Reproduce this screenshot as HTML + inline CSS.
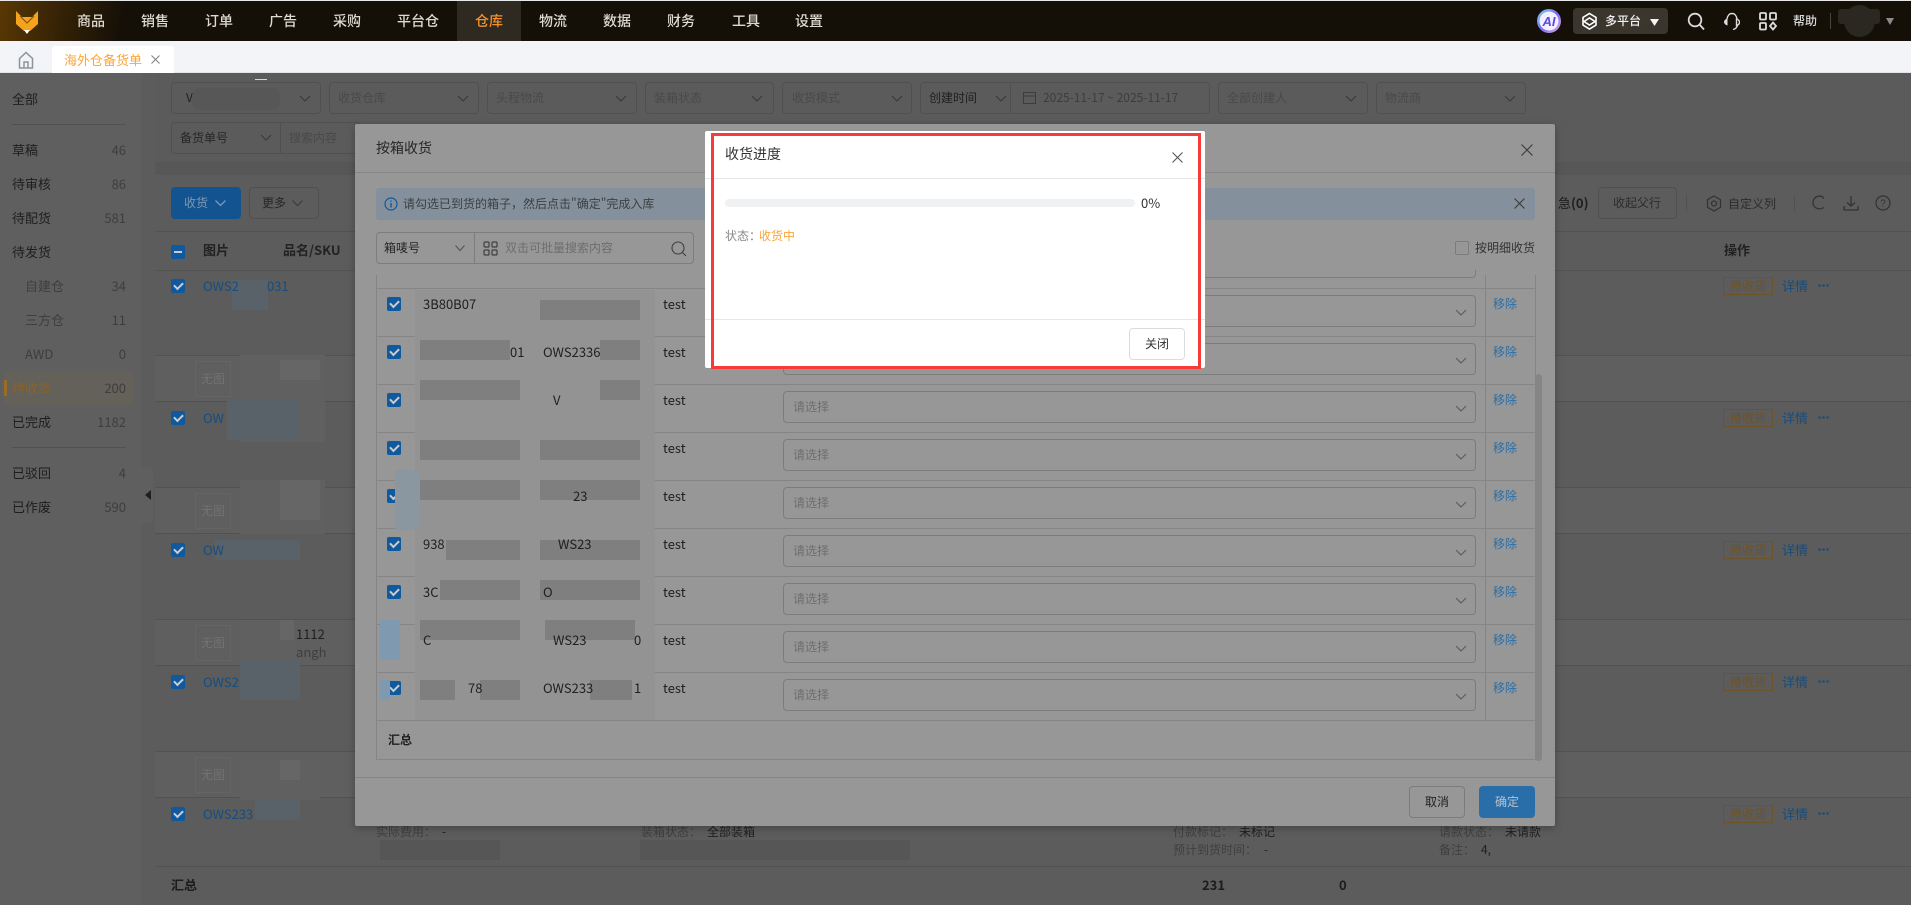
<!DOCTYPE html>
<html lang="zh">
<head>
<meta charset="utf-8">
<title>海外仓备货单</title>
<style>
*{box-sizing:border-box}
html,body{margin:0;padding:0;width:1911px;height:905px;overflow:hidden;background:#5b5c5b}
body{position:relative;font-family:"Noto Sans CJK SC","Liberation Sans",sans-serif;font-size:12px;color:#1c1c1c}
.t,.b,svg.i{position:absolute}
.t{white-space:nowrap;line-height:20px;height:20px}
.n{color:#dedad2;font-size:14px;font-weight:500;width:64px;text-align:center;top:11px}
.s{font-size:13px;left:12px;color:#1e1e1e}
.c{font-size:13px;right:1785px;color:#3e3e3e;text-align:right}
.f{border:1px solid #505050;border-radius:4px;height:32px}
.ph{color:#494949;font-size:12px}
.cb{position:absolute;width:14px;height:14px;border-radius:2px;background:#0f5a9e}
.cb:after{content:"";position:absolute;left:3px;top:3px;width:7px;height:4px;border-left:2px solid #c8ccd0;border-bottom:2px solid #c8ccd0;transform:rotate(-45deg)}
.lk{color:#174d80;font-size:13px}
.tag{position:absolute;left:1723px;width:50px;height:18px;border:1px solid #6e5228;border-radius:2px;color:#6e5228;font-size:12px;line-height:16px;text-align:center}
.dots{position:absolute;left:1818px;width:11px;height:3px}
.pl{color:#6e6e6e;font-size:12px}
.sel{position:absolute;left:783px;width:693px;height:32px;border:1px solid #7c7c7c;border-radius:4px}
.rm{color:#2a6fa8;font-size:12px;left:1493px}
.tx{color:#1f1f1f;font-size:12px}
.m{position:absolute;background:#7f7f7f}
.m2{position:absolute;background:#939393}
.pm{position:absolute;background:#5f605f}
.pb{position:absolute;background:#596268}
.lab{color:#3f3f3f}
</style>
</head>
<body>
<!-- NAV -->
<div class="b" style="left:0;top:0;width:1911px;height:41px;background:#151007;border-top:1px solid #e8e8e8"></div>
<div class="b" style="left:0;top:1px;width:160px;height:40px;background:linear-gradient(100deg,#5a3804 0%,#3c2606 30%,#151007 75%)"></div>
<svg class="i" style="left:15px;top:10px" width="24" height="25" viewBox="0 0 24 25"><path d="M1 1 L7 7 H17 L23 1 V14 L15 21 H9 L1 14Z" fill="#f5a31d"/><path d="M5 6 L12 13 L19 6" fill="none" stroke="#7a4f08" stroke-width="1"/><path d="M9 20 H15 L12 24Z" fill="#fff"/></svg>
<div class="b" style="left:457px;top:1px;width:64px;height:40px;background:#2e2a22"></div>
<div class="t n" style="left:59px">商品</div>
<div class="t n" style="left:123px">销售</div>
<div class="t n" style="left:187px">订单</div>
<div class="t n" style="left:251px">广告</div>
<div class="t n" style="left:315px">采购</div>
<div class="t n" style="left:386px">平台仓</div>
<div class="t n" style="left:457px;color:#f2912b">仓库</div>
<div class="t n" style="left:521px">物流</div>
<div class="t n" style="left:585px">数据</div>
<div class="t n" style="left:649px">财务</div>
<div class="t n" style="left:714px">工具</div>
<div class="t n" style="left:777px">设置</div>
<!-- nav right -->
<svg class="i" style="left:1536px;top:8px" width="26" height="26" viewBox="0 0 26 26"><defs><linearGradient id="g" x1="0" y1="0" x2="1" y2="1"><stop offset="0" stop-color="#7ad9f5"/><stop offset=".5" stop-color="#7b6cf5"/><stop offset="1" stop-color="#e9a5ef"/></linearGradient></defs><circle cx="13" cy="13" r="12" fill="url(#g)"/><circle cx="13" cy="13" r="9.5" fill="#f3f1ff"/><text x="13" y="18" text-anchor="middle" font-size="13" font-weight="700" font-style="italic" fill="#5a49e8" font-family="Liberation Sans">AI</text></svg>
<div class="b" style="left:1573px;top:8px;width:95px;height:26px;border-radius:4px;background:#3a362e"></div>
<svg class="i" style="left:1581px;top:12px" width="17" height="19" viewBox="0 0 17 19" fill="none" stroke="#fff" stroke-width="1.6"><path d="M8.5 1.500 L15 5.500 V13 L8.5 17 L2 13 V5.500Z"/><path d="M3 9.500 L8.5 6 L14 9.500 L8.5 13Z"/></svg>
<div class="t" style="left:1605px;top:11px;color:#f2f2f2;font-weight:500;font-size:12px">多平台</div>
<svg class="i" style="left:1650px;top:19px" width="9" height="7"><path d="M0 0H9L4.500 7Z" fill="#f4f4f4"/></svg>
<svg class="i" style="left:1687px;top:12px" width="19" height="19" viewBox="0 0 19 19" fill="none" stroke="#dcdcdc" stroke-width="1.800"><circle cx="8" cy="8" r="6.300"/><path d="M12.500 12.500L17 17.500"/></svg>
<svg class="i" style="left:1723px;top:12px" width="17" height="20" viewBox="0 0 17 20" fill="none" stroke="#dcdcdc" stroke-width="1.400"><path d="M4 7C4.500 3.500 6.500 1.500 9 1.500s4.500 2 5 5.500"/><path d="M14.500 13c-.5 2.500-2 4-4.500 4.500"/><path d="M4.500 6.500C2.500 7 1 8.500 1 10s1.500 3 3.500 3.500Z" fill="#dcdcdc" stroke="none"/><path d="M13.500 7c1.500 .5 3 1.700 3 3.200s-1.500 2.800-3 3.300Z"/></svg>
<svg class="i" style="left:1759px;top:12px" width="18" height="19" viewBox="0 0 18 19" fill="none" stroke="#dcdcdc" stroke-width="1.800"><rect x="1" y="1" width="6" height="6.500" rx="1"/><rect x="11" y="1" width="6" height="6.500" rx="1"/><rect x="1" y="11" width="6" height="6.500" rx="1"/><path d="M14 10.500l3 3.500-3 3.500-3-3.500Z"/></svg>
<div class="t" style="left:1793px;top:11px;color:#d8d8d8;font-size:12px;font-weight:500">帮助</div>
<div class="b" style="left:1830px;top:13px;width:1px;height:16px;background:#4a463e"></div>
<div class="b" style="left:1844px;top:5px;width:31px;height:32px;border-radius:50%;background:#2b2821"></div>
<div class="b" style="left:1838px;top:9px;width:42px;height:15px;background:#2b2821;border-radius:3px"></div>
<svg class="i" style="left:1886px;top:18px" width="8" height="7"><path d="M0 0H8L4 7Z" fill="#8a8a8a"/></svg>

<!-- TAB BAR -->
<div class="b" style="left:0;top:41px;width:1911px;height:32px;background:#f3f4f8;border-bottom:1px solid #e4e5e9"></div>
<svg class="i" style="left:18px;top:51px" width="16" height="18" viewBox="0 0 16 18" fill="none" stroke="#8d939c" stroke-width="1.500"><path d="M1.500 7.500L8 1.500l6.500 6V17h-13Z"/><path d="M6 17v-6h4v6"/></svg>
<div class="b" style="left:52px;top:46px;width:122px;height:27px;background:#fff;border-radius:3px 3px 0 0"></div>
<div class="t" style="left:64px;top:50px;color:#f9a63b;font-size:13px">海外仓备货单</div>
<svg class="i" style="left:151px;top:55px" width="9" height="9" fill="none" stroke="#7f7f7f" stroke-width="1"><path d="M.5 .5l8 8M8.500 .5l-8 8"/></svg>

<!-- SIDEBAR -->
<div class="b" style="left:0;top:73px;width:142px;height:832px;background:#5f5f5f"></div>
<div class="t s" style="top:89px">全部</div>
<div class="b" style="left:12px;top:124px;width:114px;height:1px;background:#515151"></div>
<div class="t s" style="top:140px">草稿</div><div class="t c" style="top:140px">46</div>
<div class="t s" style="top:174px">待审核</div><div class="t c" style="top:174px">86</div>
<div class="t s" style="top:208px">待配货</div><div class="t c" style="top:208px">581</div>
<div class="t s" style="top:242px">待发货</div>
<div class="t s" style="top:276px;left:25px;color:#3e3e3e">自建仓</div><div class="t c" style="top:276px">34</div>
<div class="t s" style="top:310px;left:25px;color:#3e3e3e">三方仓</div><div class="t c" style="top:310px">11</div>
<div class="t s" style="top:344px;left:25px;color:#3e3e3e">AWD</div><div class="t c" style="top:344px">0</div>
<div class="b" style="left:4px;top:371px;width:129px;height:34px;border-radius:4px;background:#64615a"></div>
<div class="b" style="left:4px;top:380px;width:3px;height:16px;background:#9a6e22"></div>
<div class="t s" style="top:378px;color:#8a6228">待收货</div><div class="t c" style="top:378px">200</div>
<div class="t s" style="top:412px">已完成</div><div class="t c" style="top:412px">1182</div>
<div class="b" style="left:12px;top:447px;width:114px;height:1px;background:#515151"></div>
<div class="t s" style="top:463px">已驳回</div><div class="t c" style="top:463px">4</div>
<div class="t s" style="top:497px">已作废</div><div class="t c" style="top:497px">590</div>
<div class="b" style="left:142px;top:467px;width:11px;height:56px;background:#5f5f5f;border-radius:0 5px 5px 0"></div>
<svg class="i" style="left:145px;top:490px" width="6" height="10"><path d="M6 0V10L0 5Z" fill="#1f1f1f"/></svg>

<!-- FILTER CARD -->
<div class="b" style="left:155px;top:73px;width:1756px;height:89px;background:#5b5b5b"></div>
<div class="b" style="left:155px;top:162px;width:1756px;height:13px;background:#565756"></div>
<div class="b f" style="left:171px;top:82px;width:150px"></div>
<div class="b f" style="left:329px;top:82px;width:150px"></div><div class="t ph" style="left:338px;top:88px">收货仓库</div>
<div class="b f" style="left:487px;top:82px;width:150px"></div><div class="t ph" style="left:496px;top:88px">头程物流</div>
<div class="b f" style="left:645px;top:82px;width:129px"></div><div class="t ph" style="left:654px;top:88px">装箱状态</div>
<div class="b f" style="left:782px;top:82px;width:130px"></div><div class="t ph" style="left:792px;top:88px">收货模式</div>
<div class="b f" style="left:920px;top:82px;width:290px"></div><div class="b" style="left:1010px;top:82px;width:1px;height:32px;background:#505050"></div>
<div class="t" style="left:929px;top:88px;color:#1f1f1f">创建时间</div>
<svg class="i" style="left:1023px;top:91px" width="13" height="13" fill="none" stroke="#3c3c3c"><rect x=".5" y="1.500" width="12" height="11"/><path d="M.5 5h12"/></svg>
<div class="t" style="left:1043px;top:88px;color:#3d3d3d">2025-11-17 ~ 2025-11-17</div>
<div class="b f" style="left:1218px;top:82px;width:150px"></div><div class="t ph" style="left:1227px;top:88px">全部创建人</div>
<div class="b f" style="left:1376px;top:82px;width:150px"></div><div class="t ph" style="left:1385px;top:88px">物流商</div>
<svg class="i" style="left:0;top:0" width="1911" height="200" fill="none" stroke="#3c3c3c" stroke-width="1.200"><path d="M300 96l5 5 5-5M458 96l5 5 5-5M616 96l5 5 5-5M752 96l5 5 5-5M892 96l5 5 5-5M996 96l5 5 5-5M1346 96l5 5 5-5M1505 96l5 5 5-5M261 135l5 5 5-5"/></svg>
<div class="t" style="left:186px;top:88px;color:#1f1f1f">V</div>
<div class="b" style="left:192px;top:88px;width:88px;height:22px;background:#575757;border-radius:8px"></div>
<div class="b" style="left:255px;top:79px;width:12px;height:1px;background:#d8d8d8"></div>
<div class="b f" style="left:171px;top:122px;width:190px"></div><div class="b" style="left:280px;top:122px;width:1px;height:32px;background:#505050"></div>
<div class="t" style="left:180px;top:128px;color:#262626">备货单号</div><div class="t ph" style="left:289px;top:128px">搜索内容</div>

<!-- TABLE CARD -->
<div class="b" style="left:155px;top:175px;width:1756px;height:730px;background:#5b5c5b"></div>
<div class="b" style="left:171px;top:187px;width:70px;height:32px;background:#13538f;border-radius:4px"></div>
<div class="t" style="left:184px;top:193px;color:#7d99b5">收货</div>
<svg class="i" style="left:215px;top:200px" width="11" height="7" fill="none" stroke="#7d99b5" stroke-width="1.300"><path d="M.5 .5l5 5 5-5"/></svg>
<div class="b f" style="left:249px;top:187px;width:70px"></div>
<div class="t" style="left:262px;top:193px;color:#262626">更多</div>
<svg class="i" style="left:292px;top:200px" width="11" height="7" fill="none" stroke="#3c3c3c" stroke-width="1.200"><path d="M.5 .5l5 5 5-5"/></svg>
<div class="t" style="left:1558px;top:193px;color:#1d1d1d;font-size:13px">急<b>(0)</b></div>
<div class="b f" style="left:1598px;top:187px;width:79px"></div>
<div class="t" style="left:1613px;top:193px;color:#2c2c2c">收起父行</div>
<div class="b" style="left:1686px;top:195px;width:1px;height:16px;background:#515151"></div>
<svg class="i" style="left:1706px;top:195px" width="16" height="17" fill="none" stroke="#333" stroke-width="1.200"><path d="M8 1l6.500 3.700v7.600L8 16 1.500 12.300V4.700Z"/><circle cx="8" cy="8.500" r="2.500"/></svg>
<div class="t" style="left:1728px;top:194px;color:#2c2c2c">自定义列</div>
<div class="b" style="left:1794px;top:195px;width:1px;height:16px;background:#515151"></div>
<svg class="i" style="left:1811px;top:194px" width="16" height="18" fill="none" stroke="#333" stroke-width="1.300"><path d="M13 4.500C10 .500 3 1.500 2 8c-.6 5 5 9 11 5.500"/></svg>
<svg class="i" style="left:1843px;top:195px" width="16" height="16" fill="none" stroke="#333" stroke-width="1.300"><path d="M8 1v10M4 7.500L8 11l4-3.500M1 11v4h14v-4"/></svg>
<svg class="i" style="left:1875px;top:195px" width="16" height="16" fill="none" stroke="#333" stroke-width="1.200"><circle cx="8" cy="8" r="7"/><text x="8" y="11.500" text-anchor="middle" font-size="10" fill="#333" stroke="none" font-family="Liberation Sans">?</text></svg>
<div class="b" style="left:155px;top:231px;width:1756px;height:1px;background:#515251"></div>
<div class="b" style="left:155px;top:270px;width:1756px;height:1px;background:#515251"></div>
<div class="b" style="left:171px;top:245px;width:14px;height:14px;border-radius:2px;background:#0f5a9e"></div>
<div class="b" style="left:174px;top:251px;width:8px;height:2px;background:#c8ccd0"></div>
<div class="t" style="left:203px;top:240px;font-size:13px;font-weight:700;color:#222">图片</div>
<div class="t" style="left:283px;top:240px;font-size:13px;font-weight:700;color:#222">品名/SKU</div>
<div class="t" style="left:1724px;top:240px;font-size:13px;font-weight:700;color:#222">操作</div>

<!-- child rows -->
<div class="b" style="left:155px;top:355px;width:1756px;height:47px;background:#5e5f5e;border-top:1px solid #515251;border-bottom:1px solid #515251"></div>
<div class="b" style="left:155px;top:487px;width:1756px;height:47px;background:#5e5f5e;border-top:1px solid #515251;border-bottom:1px solid #515251"></div>
<div class="b" style="left:155px;top:619px;width:1756px;height:47px;background:#5e5f5e;border-top:1px solid #515251;border-bottom:1px solid #515251"></div>
<div class="b" style="left:155px;top:751px;width:1756px;height:47px;background:#5e5f5e;border-top:1px solid #515251;border-bottom:1px solid #515251"></div>
<div class="b" style="left:155px;top:866px;width:1756px;height:1px;background:#515251"></div>
<div class="t pl" style="left:195px;top:369px;width:36px;height:36px;line-height:34px;margin-top:-8px;text-align:center;border:1px solid #656565;color:#727272">无图</div>
<div class="t pl" style="left:195px;top:501px;width:36px;height:36px;line-height:34px;margin-top:-8px;text-align:center;border:1px solid #656565;color:#727272">无图</div>
<div class="t pl" style="left:195px;top:633px;width:36px;height:36px;line-height:34px;margin-top:-8px;text-align:center;border:1px solid #656565;color:#727272">无图</div>
<div class="t pl" style="left:195px;top:765px;width:36px;height:36px;line-height:34px;margin-top:-8px;text-align:center;border:1px solid #656565;color:#727272">无图</div>
<!-- page mosaic -->
<div class="pm" style="left:240px;top:355px;width:85px;height:47px"></div>
<div class="pm" style="left:240px;top:402px;width:85px;height:40px"></div>
<div class="pm" style="left:240px;top:480px;width:85px;height:54px"></div>
<div class="pm" style="left:240px;top:620px;width:55px;height:50px"></div>
<div class="pm" style="left:240px;top:760px;width:80px;height:40px"></div>
<div class="b" style="left:280px;top:360px;width:40px;height:20px;background:#666"></div>
<div class="b" style="left:280px;top:480px;width:40px;height:40px;background:#666"></div>
<div class="b" style="left:280px;top:620px;width:14px;height:20px;background:#666"></div>
<div class="b" style="left:280px;top:760px;width:20px;height:20px;background:#666"></div>
<div class="pb" style="left:227px;top:400px;width:73px;height:40px"></div>
<div class="pb" style="left:215px;top:540px;width:85px;height:20px"></div>
<div class="pb" style="left:240px;top:660px;width:60px;height:40px"></div>
<div class="pb" style="left:255px;top:800px;width:45px;height:20px"></div>
<div class="pb" style="left:232px;top:280px;width:36px;height:30px"></div>
<div class="b cb" style="left:171px;top:279px"></div>
<div class="b cb" style="left:171px;top:411px"></div>
<div class="b cb" style="left:171px;top:543px"></div>
<div class="b cb" style="left:171px;top:675px"></div>
<div class="b cb" style="left:171px;top:807px"></div>
<div class="t lk" style="left:203px;top:276px">OWS2</div><div class="t lk" style="left:267px;top:276px">031</div>
<div class="t lk" style="left:203px;top:408px">OW</div>
<div class="t lk" style="left:203px;top:540px">OW</div>
<div class="t lk" style="left:203px;top:672px">OWS2</div>
<div class="t lk" style="left:203px;top:804px">OWS233</div>
<div class="t tx" style="left:296px;top:624px;font-size:13px">1112</div>
<div class="t" style="left:296px;top:642px;color:#3e3e3e;font-size:13px">angh</div>
<div class="tag" style="top:277px">待收货</div><div class="t lk" style="left:1782px;top:276px">详情</div>
<svg class="dots" style="top:284px" viewBox="0 0 11 3"><circle cx="1.500" cy="1.500" r="1.300" fill="#174d80"/><circle cx="5.500" cy="1.500" r="1.300" fill="#174d80"/><circle cx="9.500" cy="1.500" r="1.300" fill="#174d80"/></svg>
<div class="tag" style="top:409px">待收货</div><div class="t lk" style="left:1782px;top:408px">详情</div>
<svg class="dots" style="top:416px" viewBox="0 0 11 3"><circle cx="1.500" cy="1.500" r="1.300" fill="#174d80"/><circle cx="5.500" cy="1.500" r="1.300" fill="#174d80"/><circle cx="9.500" cy="1.500" r="1.300" fill="#174d80"/></svg>
<div class="tag" style="top:541px">待收货</div><div class="t lk" style="left:1782px;top:540px">详情</div>
<svg class="dots" style="top:548px" viewBox="0 0 11 3"><circle cx="1.500" cy="1.500" r="1.300" fill="#174d80"/><circle cx="5.500" cy="1.500" r="1.300" fill="#174d80"/><circle cx="9.500" cy="1.500" r="1.300" fill="#174d80"/></svg>
<div class="tag" style="top:673px">待收货</div><div class="t lk" style="left:1782px;top:672px">详情</div>
<svg class="dots" style="top:680px" viewBox="0 0 11 3"><circle cx="1.500" cy="1.500" r="1.300" fill="#174d80"/><circle cx="5.500" cy="1.500" r="1.300" fill="#174d80"/><circle cx="9.500" cy="1.500" r="1.300" fill="#174d80"/></svg>
<div class="tag" style="top:805px">待收货</div><div class="t lk" style="left:1782px;top:804px">详情</div>
<svg class="dots" style="top:812px" viewBox="0 0 11 3"><circle cx="1.500" cy="1.500" r="1.300" fill="#174d80"/><circle cx="5.500" cy="1.500" r="1.300" fill="#174d80"/><circle cx="9.500" cy="1.500" r="1.300" fill="#174d80"/></svg>
<div class="t lab" style="left:376px;top:822px">实际费用：</div><div class="t tx" style="left:442px;top:822px">-</div>
<div class="t lab" style="left:641px;top:822px">装箱状态：</div><div class="t tx" style="left:707px;top:822px">全部装箱</div>
<div class="t lab" style="left:1173px;top:822px">付款标记：</div><div class="t tx" style="left:1239px;top:822px">未标记</div>
<div class="t lab" style="left:1173px;top:840px">预计到货时间：</div><div class="t tx" style="left:1264px;top:840px">-</div>
<div class="t lab" style="left:1439px;top:822px">请款状态：</div><div class="t tx" style="left:1505px;top:822px">未请款</div>
<div class="t lab" style="left:1439px;top:840px">备注：</div><div class="t tx" style="left:1481px;top:840px">4,</div>
<div class="b" style="left:640px;top:840px;width:270px;height:20px;background:#555655"></div>
<div class="b" style="left:380px;top:840px;width:120px;height:20px;background:#555655"></div>
<div class="t" style="left:171px;top:875px;font-size:13px;font-weight:700;color:#1c1c1c">汇总</div>
<div class="t" style="left:1202px;top:875px;font-size:13px;font-weight:700;color:#1c1c1c">231</div>
<div class="t" style="left:1339px;top:875px;font-size:13px;font-weight:700;color:#1c1c1c">0</div>

<!-- DIALOG 1 -->
<div class="b" style="left:355px;top:124px;width:1200px;height:702px;background:#979797;border-radius:2px;box-shadow:0 2px 8px rgba(0,0,0,.25)"></div>
<div class="t" style="left:376px;top:138px;font-size:14px;color:#262626">按箱收货</div>
<div class="b" style="left:355px;top:172px;width:1200px;height:1px;background:#858585"></div>
<svg class="i" style="left:1521px;top:144px" width="12" height="12" fill="none" stroke="#3a3a3a" stroke-width="1.100"><path d="M.5 .5l11 11M11.500 .5l-11 11"/></svg>
<div class="b" style="left:376px;top:188px;width:1159px;height:32px;background:#84919c;border-radius:3px"></div>
<svg class="i" style="left:384px;top:197px" width="14" height="14" fill="none" stroke="#0f5a9e" stroke-width="1.200"><circle cx="7" cy="7" r="6"/><path d="M7 6v4.500M7 3.500v1.300" stroke-width="1.400"/></svg>
<div class="t" style="left:403px;top:194px;color:#3c3f42">请勾选已到货的箱子，然后点击"确定"完成入库</div>
<svg class="i" style="left:1514px;top:198px" width="11" height="11" fill="none" stroke="#3a3a3a" stroke-width="1.100"><path d="M.5 .5l10 10M10.500 .5l-10 10"/></svg>
<div class="b" style="left:376px;top:232px;width:318px;height:32px;border:1px solid #7d7d7d;border-radius:4px"></div>
<div class="b" style="left:474px;top:232px;width:1px;height:32px;background:#7d7d7d"></div>
<div class="t" style="left:384px;top:238px;color:#262626">箱唛号</div>
<svg class="i" style="left:455px;top:245px" width="10" height="7" fill="none" stroke="#555" stroke-width="1.100"><path d="M.5 .5L5 5.500 9.500 .5"/></svg>
<svg class="i" style="left:483px;top:241px" width="15" height="15" fill="none" stroke="#3f3f3f" stroke-width="1.200"><rect x="1" y="1" width="5" height="5" rx="1"/><rect x="9" y="1" width="5" height="5" rx="1"/><rect x="1" y="9" width="5" height="5" rx="1"/><rect x="9" y="9" width="5" height="5" rx="1"/></svg>
<div class="t pl" style="left:505px;top:238px">双击可批量搜索内容</div>
<svg class="i" style="left:671px;top:241px" width="16" height="16" fill="none" stroke="#3f3f3f" stroke-width="1.100"><circle cx="7" cy="7" r="6"/><path d="M11.500 11.500L15 15"/></svg>
<div class="b" style="left:1455px;top:241px;width:14px;height:14px;border:1px solid #7c7c7c;border-radius:2px"></div>
<div class="t" style="left:1475px;top:238px;color:#333">按明细收货</div>
<!-- dialog table lines -->
<div class="b" style="left:376px;top:275px;width:1px;height:485px;background:#858585"></div>
<div class="b" style="left:1485px;top:275px;width:1px;height:445px;background:#858585"></div>
<div class="b" style="left:1535px;top:275px;width:1px;height:485px;background:#858585"></div>
<div class="b" style="left:376px;top:288px;width:1159px;height:1px;background:#858585"></div>
<div class="b" style="left:376px;top:336px;width:1159px;height:1px;background:#858585"></div>
<div class="b" style="left:376px;top:384px;width:1159px;height:1px;background:#858585"></div>
<div class="b" style="left:376px;top:432px;width:1159px;height:1px;background:#858585"></div>
<div class="b" style="left:376px;top:480px;width:1159px;height:1px;background:#858585"></div>
<div class="b" style="left:376px;top:528px;width:1159px;height:1px;background:#858585"></div>
<div class="b" style="left:376px;top:576px;width:1159px;height:1px;background:#858585"></div>
<div class="b" style="left:376px;top:624px;width:1159px;height:1px;background:#858585"></div>
<div class="b" style="left:376px;top:672px;width:1159px;height:1px;background:#858585"></div>
<div class="b" style="left:376px;top:720px;width:1159px;height:1px;background:#858585"></div>
<div class="b" style="left:376px;top:759px;width:1160px;height:1px;background:#858585;border-radius:3px"></div>
<div class="b" style="left:1535px;top:374px;width:7px;height:387px;background:#858585;border-radius:4px"></div>
<!-- right selects -->
<div class="b" style="left:783px;top:270px;width:693px;height:8px;border-bottom:1px solid #7c7c7c;border-left:1px solid #7c7c7c;border-right:1px solid #7c7c7c;border-radius:0 0 4px 4px"></div>
<div class="sel" style="top:295px"></div>
<div class="sel" style="top:343px"></div><div class="t pl" style="left:793px;top:349px">请选择</div>
<div class="sel" style="top:391px"></div><div class="t pl" style="left:793px;top:397px">请选择</div>
<div class="sel" style="top:439px"></div><div class="t pl" style="left:793px;top:445px">请选择</div>
<div class="sel" style="top:487px"></div><div class="t pl" style="left:793px;top:493px">请选择</div>
<div class="sel" style="top:535px"></div><div class="t pl" style="left:793px;top:541px">请选择</div>
<div class="sel" style="top:583px"></div><div class="t pl" style="left:793px;top:589px">请选择</div>
<div class="sel" style="top:631px"></div><div class="t pl" style="left:793px;top:637px">请选择</div>
<div class="sel" style="top:679px"></div><div class="t pl" style="left:793px;top:685px">请选择</div>
<svg class="i" style="left:0;top:0" width="1911" height="905" fill="none" stroke="#5a5a5a" stroke-width="1.100"><path d="M1456 310l5 5 5-5M1456 358l5 5 5-5M1456 406l5 5 5-5M1456 454l5 5 5-5M1456 502l5 5 5-5M1456 550l5 5 5-5M1456 598l5 5 5-5M1456 646l5 5 5-5M1456 694l5 5 5-5"/></svg>
<div class="t rm" style="top:294px">移除</div>
<div class="t rm" style="top:342px">移除</div>
<div class="t rm" style="top:390px">移除</div>
<div class="t rm" style="top:438px">移除</div>
<div class="t rm" style="top:486px">移除</div>
<div class="t rm" style="top:534px">移除</div>
<div class="t rm" style="top:582px">移除</div>
<div class="t rm" style="top:630px">移除</div>
<div class="t rm" style="top:678px">移除</div>
<!-- dialog mosaic -->
<div class="m2" style="left:415px;top:290px;width:240px;height:430px"></div>
<div class="cb" style="left:387px;top:297px"></div>
<div class="cb" style="left:387px;top:345px"></div>
<div class="cb" style="left:387px;top:393px"></div>
<div class="cb" style="left:387px;top:441px"></div>
<div class="cb" style="left:387px;top:489px"></div>
<div class="cb" style="left:387px;top:537px"></div>
<div class="cb" style="left:387px;top:585px"></div>
<div class="cb" style="left:387px;top:681px"></div>
<div class="b" style="left:395px;top:470px;width:25px;height:60px;background:#8a97a1"></div>
<div class="b" style="left:380px;top:620px;width:20px;height:40px;background:#7f99b0"></div>
<div class="b" style="left:380px;top:680px;width:10px;height:20px;background:#7f99b0"></div>
<div class="m" style="left:540px;top:300px;width:100px;height:20px"></div>
<div class="m" style="left:420px;top:340px;width:90px;height:20px"></div>
<div class="m" style="left:600px;top:340px;width:40px;height:20px"></div>
<div class="m" style="left:420px;top:380px;width:100px;height:20px"></div>
<div class="m" style="left:600px;top:380px;width:40px;height:20px"></div>
<div class="m" style="left:420px;top:440px;width:100px;height:20px"></div>
<div class="m" style="left:540px;top:440px;width:100px;height:20px"></div>
<div class="m" style="left:420px;top:480px;width:100px;height:20px"></div>
<div class="m" style="left:540px;top:480px;width:100px;height:20px"></div>
<div class="m" style="left:446px;top:540px;width:74px;height:20px"></div>
<div class="m" style="left:540px;top:540px;width:100px;height:20px"></div>
<div class="m" style="left:440px;top:580px;width:80px;height:20px"></div>
<div class="m" style="left:540px;top:580px;width:100px;height:20px"></div>
<div class="m" style="left:420px;top:620px;width:100px;height:20px"></div>
<div class="m" style="left:545px;top:620px;width:90px;height:20px"></div>
<div class="m" style="left:420px;top:680px;width:35px;height:20px"></div>
<div class="m" style="left:480px;top:680px;width:40px;height:20px"></div>
<div class="m" style="left:590px;top:680px;width:42px;height:20px"></div>
<div class="t tx" style="left:423px;top:294px;font-size:13px">3B80B07</div>
<div class="t tx" style="left:510px;top:342px;font-size:13px">01</div>
<div class="t tx" style="left:543px;top:342px;font-size:13px">OWS2336</div>
<div class="t tx" style="left:553px;top:390px;font-size:13px">V</div>
<div class="t tx" style="left:573px;top:486px;font-size:13px">23</div>
<div class="t tx" style="left:423px;top:534px;font-size:13px">938</div>
<div class="t tx" style="left:558px;top:534px;font-size:13px">WS23</div>
<div class="t tx" style="left:423px;top:582px;font-size:13px">3C</div>
<div class="t tx" style="left:543px;top:582px;font-size:13px">O</div>
<div class="t tx" style="left:423px;top:630px;font-size:13px">C</div>
<div class="t tx" style="left:553px;top:630px;font-size:13px">WS23</div>
<div class="t tx" style="left:634px;top:630px;font-size:13px">0</div>
<div class="t tx" style="left:468px;top:678px;font-size:13px">78</div>
<div class="t tx" style="left:543px;top:678px;font-size:13px">OWS233</div>
<div class="t tx" style="left:634px;top:678px;font-size:13px">1</div>
<div class="t tx" style="left:663px;top:294px;font-size:13px">test</div>
<div class="t tx" style="left:663px;top:342px;font-size:13px">test</div>
<div class="t tx" style="left:663px;top:390px;font-size:13px">test</div>
<div class="t tx" style="left:663px;top:438px;font-size:13px">test</div>
<div class="t tx" style="left:663px;top:486px;font-size:13px">test</div>
<div class="t tx" style="left:663px;top:534px;font-size:13px">test</div>
<div class="t tx" style="left:663px;top:582px;font-size:13px">test</div>
<div class="t tx" style="left:663px;top:630px;font-size:13px">test</div>
<div class="t tx" style="left:663px;top:678px;font-size:13px">test</div>
<div class="t" style="left:388px;top:730px;font-weight:700;color:#1f1f1f">汇总</div>
<div class="b" style="left:355px;top:777px;width:1200px;height:1px;background:#858585"></div>
<div class="b" style="left:1409px;top:786px;width:56px;height:32px;border:1px solid #7c7c7c;border-radius:4px"></div>
<div class="t" style="left:1409px;width:56px;text-align:center;top:792px;color:#222">取消</div>
<div class="b" style="left:1479px;top:786px;width:56px;height:32px;background:#2a6ea9;border-radius:4px"></div>
<div class="t" style="left:1479px;width:56px;text-align:center;top:792px;color:#b4c3d0">确定</div>

<!-- DIALOG 2 -->
<div class="b" style="left:705px;top:131px;width:500px;height:237px;background:#fff;border-radius:2px"></div>
<div class="t" style="left:725px;top:144px;font-size:14px;color:#333">收货进度</div>
<svg class="i" style="left:1172px;top:152px" width="11" height="11" fill="none" stroke="#555" stroke-width="1.100"><path d="M.5 .5l10 10M10.500 .5l-10 10"/></svg>
<div class="b" style="left:705px;top:178px;width:500px;height:1px;background:#e6e6e6"></div>
<div class="b" style="left:725px;top:199px;width:410px;height:8px;background:#f0f1f3;border-radius:4px"></div>
<div class="t" style="left:1141px;top:193px;font-size:13px;color:#333">0%</div>
<div class="t" style="left:725px;top:226px;color:#8a8a8a">状态：</div>
<div class="t" style="left:759px;top:226px;color:#f9a63b">收货中</div>
<div class="b" style="left:705px;top:319px;width:500px;height:1px;background:#e6e6e6"></div>
<div class="b" style="left:1129px;top:328px;width:56px;height:32px;border:1px solid #dcdcdc;border-radius:4px;background:#fff"></div>
<div class="t" style="left:1129px;width:56px;text-align:center;top:334px;color:#333">关闭</div>
<!-- RED HIGHLIGHT -->
<div class="b" style="left:711px;top:133px;width:490px;height:236px;border:3px solid #f93a3a"></div>
</body>
</html>
